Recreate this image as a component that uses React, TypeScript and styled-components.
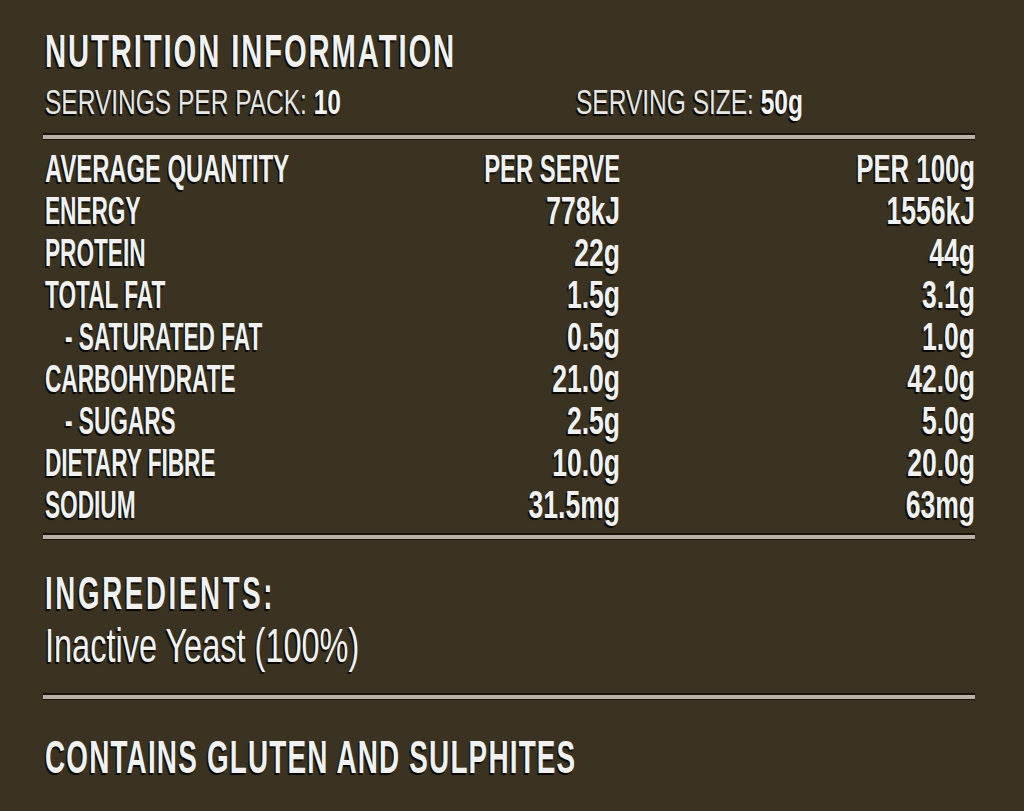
import React from "react";
import styled, { createGlobalStyle } from "styled-components";

const Global = createGlobalStyle`
  html, body { margin: 0; padding: 0; background: #3b3322; }
  body { font-family: "Liberation Sans", Arial, sans-serif; }
`;

const Panel = styled.div`
  width: 1024px;
  height: 811px;
  box-sizing: border-box;
  padding: 28px 49px 0 45px;
  background: #3b3322;
  color: #f1f1ef;
  overflow: hidden;
  display: flex;
  flex-direction: column;
`;

const shadow = `text-shadow: -2px 2px 1px rgba(0,0,0,0.85);`;

const Heading = styled.h1<{ $sx: number; $ls: number; $mt?: number }>`
  margin: ${(p) => p.$mt ?? 0}px 0 0 0;
  font-size: 46px;
  line-height: 46px;
  font-weight: 700;
  letter-spacing: ${(p) => p.$ls}px;
  white-space: nowrap;
  transform: scaleX(${(p) => p.$sx});
  transform-origin: left center;
  ${shadow}
`;

const ServingsRow = styled.div`
  margin-top: 10px;
  display: grid;
  grid-template-columns: 531px 1fr;
  font-size: 35px;
  line-height: 35px;
  height: 35px;
  color: #e6e6e3;
`;

const ServingItem = styled.div`
  white-space: nowrap;
  transform: scaleX(0.7);
  transform-origin: left center;
  font-weight: 400;
  ${shadow}
  b {
    font-weight: 700;
    color: #f4f4f2;
  }
`;

const Divider = styled.div<{ $mt: number }>`
  margin: ${(p) => p.$mt}px 0 0 -2px;
  height: 4px;
  background: #b9b1a6;
  border-top: 2px solid #1a140b;
  border-bottom: 1px solid #1f180e;
  flex-shrink: 0;
`;

const Table = styled.div`
  margin-top: 8px;
  display: flex;
  flex-direction: column;
`;

const Row = styled.div`
  display: grid;
  grid-template-columns: 1fr 150px 355px;
  height: 42px;
  font-size: 39px;
  line-height: 42px;
  font-weight: 700;
`;

const Label = styled.div<{ $indent?: boolean; $sx?: number }>`
  margin-left: ${(p) => (p.$indent ? 20 : 0)}px;
  white-space: nowrap;
  transform: scaleX(${(p) => p.$sx ?? 0.58});
  transform-origin: left center;
  ${shadow}
`;

const Value = styled.div<{ $sx: number }>`
  display: flex;
  justify-content: flex-end;
  white-space: nowrap;
  transform: scaleX(${(p) => p.$sx});
  transform-origin: right center;
  ${shadow}
  span { flex-shrink: 0; }
`;

const Ingredient = styled.p`
  margin: 6px 0 0 0;
  font-size: 48px;
  line-height: 48px;
  font-weight: 400;
  white-space: nowrap;
  transform: scaleX(0.677);
  transform-origin: left center;
  ${shadow}
`;

type Item = { name: string; serve: string; per100: string; indent?: boolean };

const rows: Item[] = [
  { name: "ENERGY", serve: "778kJ", per100: "1556kJ" },
  { name: "PROTEIN", serve: "22g", per100: "44g" },
  { name: "TOTAL FAT", serve: "1.5g", per100: "3.1g" },
  { name: "- SATURATED FAT", serve: "0.5g", per100: "1.0g", indent: true },
  { name: "CARBOHYDRATE", serve: "21.0g", per100: "42.0g" },
  { name: "- SUGARS", serve: "2.5g", per100: "5.0g", indent: true },
  { name: "DIETARY FIBRE", serve: "10.0g", per100: "20.0g" },
  { name: "SODIUM", serve: "31.5mg", per100: "63mg" },
];

export default function App() {
  return (
    <>
      <Global />
      <Panel>
        <Heading $sx={0.635} $ls={3}>NUTRITION INFORMATION</Heading>
        <ServingsRow>
          <ServingItem>
            SERVINGS PER PACK: <b>10</b>
          </ServingItem>
          <ServingItem>
            SERVING SIZE: <b>50g</b>
          </ServingItem>
        </ServingsRow>
        <Divider $mt={14} />
        <Table>
          <Row>
            <Label $sx={0.61}>AVERAGE QUANTITY</Label>
            <Value $sx={0.61}><span>PER SERVE</span></Value>
            <Value $sx={0.66}><span>PER 100g</span></Value>
          </Row>
          {rows.map((r) => (
            <Row key={r.name}>
              <Label $indent={r.indent}>{r.name}</Label>
              <Value $sx={0.68}><span>{r.serve}</span></Value>
              <Value $sx={0.68}><span>{r.per100}</span></Value>
            </Row>
          ))}
        </Table>
        <Divider $mt={7} />
        <Heading $sx={0.6} $ls={4.5} $mt={30}>INGREDIENTS:</Heading>
        <Ingredient>Inactive Yeast (100%)</Ingredient>
        <Divider $mt={23} />
        <Heading $sx={0.605} $ls={2} $mt={34}>CONTAINS GLUTEN AND SULPHITES</Heading>
      </Panel>
    </>
  );
}
